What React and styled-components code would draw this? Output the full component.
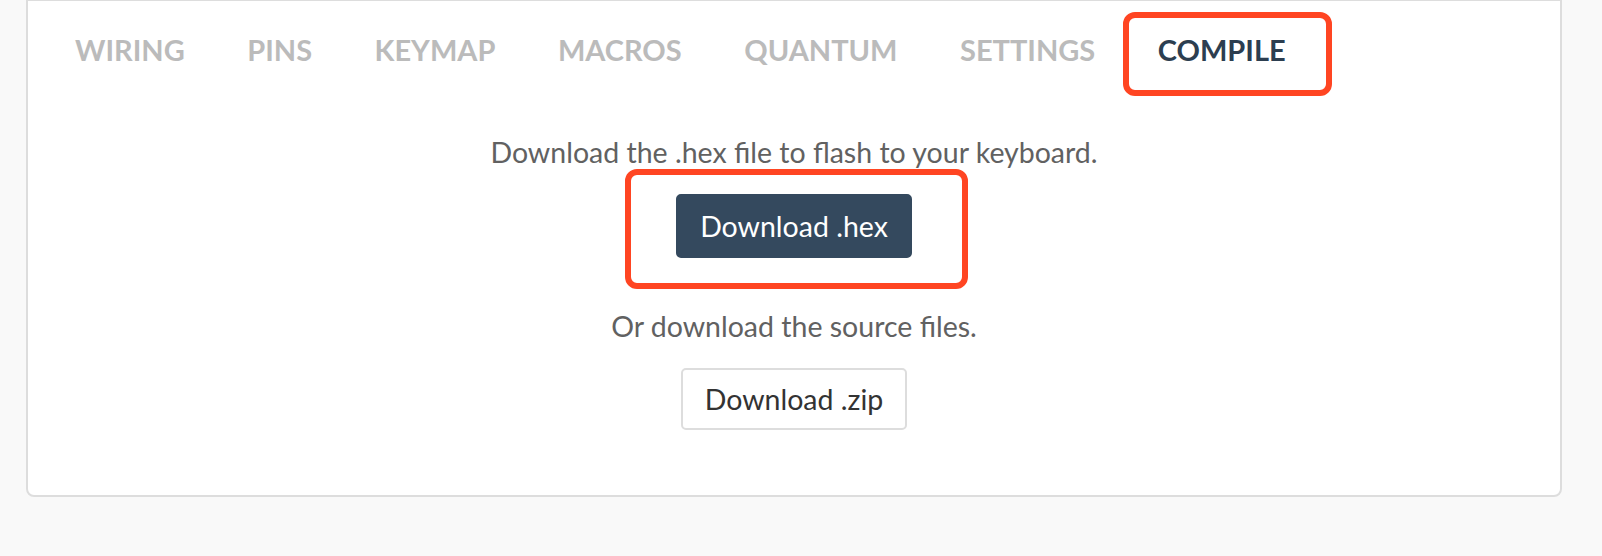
import React from 'react'
import styled, { createGlobalStyle } from 'styled-components'

const GlobalStyle = createGlobalStyle`
  html, body {
    margin: 0;
    padding: 0;
    background-color: #f9f9f9;
    font-family: Lato, "Open Sans", sans-serif;
  }
`

const Card = styled.div`
  margin-left: 26px;
  width: 1536px;
  height: 497px;
  box-sizing: border-box;
  background-color: #ffffff;
  border: 2px solid #dddddd;
  border-top-width: 1px;
  border-radius: 0 0 8px 8px;
  display: flex;
  flex-direction: column;
`

const TabBar = styled.div`
  display: flex;
  flex-direction: row;
  padding: 31px 0 0 47px;
  gap: 62.5px;
`

const Tab = styled.div`
  font-size: 29px;
  line-height: 35px;
  font-weight: 700;
  text-transform: uppercase;
  color: ${p => (p.$active ? '#2c3e50' : '#bbbbbb')};
`

const Highlight = styled.div`
  position: relative;
  display: inline-flex;

  &::after {
    content: '';
    position: absolute;
    top: ${p => p.$top}px;
    bottom: ${p => p.$bottom}px;
    left: ${p => p.$left}px;
    right: ${p => p.$right}px;
    border: 6px solid #ff4522;
    border-radius: 12px;
    pointer-events: none;
  }
`

const Body = styled.div`
  display: flex;
  flex-direction: column;
  align-items: center;
  padding-top: 68px;
`

const Lead = styled.p`
  margin: 0;
  font-size: 28.5px;
  line-height: 34px;
  color: #616161;
`

const Button = styled.button`
  font-family: Lato, "Open Sans", sans-serif;
  font-size: 28.5px;
  height: ${p => (p.$primary ? '64px' : '62px')};
  padding: 0 22px;
  border-radius: 5px;
  border: 2px solid ${p => (p.$primary ? '#34495e' : '#dddddd')};
  background-color: ${p => (p.$primary ? '#34495e' : '#ffffff')};
  color: ${p => (p.$primary ? '#ffffff' : '#333333')};
  cursor: pointer;
`

const HexBlock = styled.div`
  margin-top: 25px;
  margin-bottom: 51px;
`

const ZipBlock = styled.div`
  margin-top: 25px;
`

const tabs = ['Wiring', 'Pins', 'Keymap', 'Macros', 'Quantum', 'Settings']

export default function App() {
  return (
    <>
      <GlobalStyle />
      <Card>
        <TabBar>
          {tabs.map(name => (
            <Tab key={name}>{name}</Tab>
          ))}
          <Highlight $top={-20} $bottom={-29} $left={-35} $right={-46}>
            <Tab $active>Compile</Tab>
          </Highlight>
        </TabBar>
        <Body>
          <Lead>Download the .hex file to flash to your keyboard.</Lead>
          <HexBlock>
            <Highlight $top={-25} $bottom={-31} $left={-51} $right={-56}>
              <Button $primary>Download .hex</Button>
            </Highlight>
          </HexBlock>
          <Lead>Or download the source files.</Lead>
          <ZipBlock>
            <Button>Download .zip</Button>
          </ZipBlock>
        </Body>
      </Card>
    </>
  )
}
